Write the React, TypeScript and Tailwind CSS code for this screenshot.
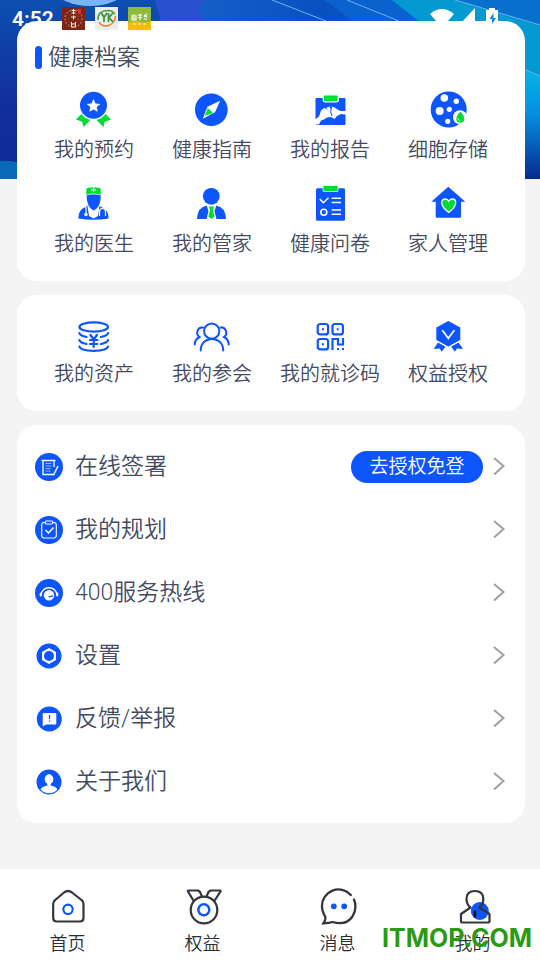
import type { ReactNode } from "react";

type Item = {
  label: string;
  icon: ReactNode;
};

const BLUE = "#0d55ff";
const GREEN = "#00dc32";
const DARK = "#33363f";

const records: Item[] = [
  {
    label: "我的预约",
    icon: (
      <>
        <path fill={GREEN} d="M2 29.5 7.3 24q4 5 9.4 5.8L9.6 37l-1.4-5.2zM37 29.5 31.7 24q-4 5-9.4 5.8l7.1 7.2 1.4-5.2z" />
        <circle cx="19.5" cy="15.3" r="13.5" fill={BLUE} />
        <path fill="#fff" d="m19.5 9 2 4.4 4.8.5-3.6 3.2 1 4.7-4.2-2.4-4.2 2.4 1-4.7-3.6-3.2 4.8-.5z" />
      </>
    ),
  },
  {
    label: "健康指南",
    icon: (
      <>
        <circle cx="19.3" cy="19.7" r="16.3" fill={BLUE} />
        <path fill="#fff" d="M28.2 10.8 23 22.3 10.8 28.8l4.6-12z" />
        <path fill={GREEN} d="m15.8 18 5.2 5-8.2 3z" />
      </>
    ),
  },
  {
    label: "我的报告",
    icon: (
      <>
        <path fill={BLUE} d="M6.5 8h28q1 0 1 1v25q0 1-1 1h-28q-1 0-1-1V9q0-1 1-1z" />
        <path
          fill="#fff"
          d="m5 29.5 4-3 2-6 3-2.5 3 1 2 3-2.5-4.5 3-1 1 3 1-3 3 1 3 2 3 1.5h8.500v4L31 24l-4 2-2.500 3-3.500-2-4 .5-3 2-3 1-2 4H5z"
        />
        <path stroke={BLUE} strokeWidth="1" fill="none" d="M21.5 17q-2 5 .5 9" />
        <rect x="13.3" y="4.8" width="15" height="7" rx="1.5" fill={GREEN} stroke="#fff" strokeWidth="1.3" />
      </>
    ),
  },
  {
    label: "细胞存储",
    icon: (
      <>
        <circle cx="20.7" cy="19.5" r="18" fill={BLUE} />
        <g fill="#fff">
          <circle cx="16.3" cy="8" r="3.8" />
          <circle cx="28.3" cy="11.3" r="2.7" />
          <circle cx="11.7" cy="21" r="4" />
          <circle cx="21.3" cy="19.3" r="2.6" />
          <circle cx="19.7" cy="31.3" r="2.6" />
          <circle cx="32" cy="27.2" r="7" />
        </g>
        <path fill={GREEN} d="M32.3 21.5q4 4.500 4 7.200a4 4 0 0 1-8 0q0-2.700 4-7.200z" />
        <path fill="none" stroke="#fff" strokeWidth=".7" d="M30 28q0 2.500 2 3" />
      </>
    ),
  },
  {
    label: "我的医生",
    icon: (
      <>
        <path fill={BLUE} d="M4.300 34.500q0-9 7-11.500l3-1.500h10l3 1.500q7.400 2.500 7.400 11.500-15 2.500-30.400 0z" />
        <path fill="#fff" d="m13.500 22 1.500 10 4.500 2.500 4.500-2.500L25.500 22z" />
        <path fill={BLUE} d="M12.700 10.300h14q.5 9-4 14.200l-3 2-3-2q-4.500-5.200-4-14.200z" />
        <path fill={GREEN} stroke="#fff" strokeWidth=".6" d="M12 11V5q0-2 7.500-2T27 5v6q-7.500-2.500-15 0z" />
        <path stroke="#fff" strokeWidth="1.200" fill="none" d="M19.500 3.500v4.600M17.200 5.800h4.600M12 23v6M25.500 32v-4q0-3.500 3-3.500t3 3.500v4" />
        <circle cx="12" cy="30.500" r="1.700" fill="#fff" />
      </>
    ),
  },
  {
    label: "我的管家",
    icon: (
      <>
        <circle cx="19.300" cy="12.300" r="8.400" fill={BLUE} />
        <path fill={BLUE} d="M5 35q.5-12 10-13.500h9Q33.500 23 34 35z" />
        <path fill="#fff" d="M14.500 21h10l-2 6 2 8.500h-10l2-8.500z" />
        <path fill={GREEN} d="M17 22.500h5L20.900 26l1.700 6.500-3.100 2.500-3.100-2.500L18.100 26z" />
      </>
    ),
  },
  {
    label: "健康问卷",
    icon: (
      <>
        <rect x="6" y="4.300" width="29" height="32.500" rx="1.500" fill={BLUE} />
        <rect x="13" y="1.500" width="15" height="6" rx=".5" fill={GREEN} stroke="#fff" strokeWidth=".7" />
        <path stroke="#fff" strokeWidth="1.500" fill="none" d="m9.800 15 3.500 3.700 5.200-5M21.700 14.200H31M21.700 18.500H31M21.700 26H31M21.700 30.300H31" />
        <circle cx="13.800" cy="28.300" r="3" stroke="#fff" strokeWidth="1.600" fill="none" />
      </>
    ),
  },
  {
    label: "家人管理",
    icon: (
      <>
        <path fill={BLUE} d="m20.300 2.700 17 15H33v15q0 1-1 1H8.700q-1 0-1-1v-15H3.300z" />
        <path
          fill={GREEN}
          stroke="#fff"
          strokeWidth="1.300"
          d="M20.700 28.500q-7-5.500-7-9.800 0-3.700 3.500-3.700 2.300 0 3.500 2.200 1.200-2.200 3.500-2.200 3.500 0 3.500 3.700 0 4.300-7 9.800z"
        />
      </>
    ),
  },
];

const services: Item[] = [
  {
    label: "我的资产",
    icon: (
      <g fill="none" stroke={BLUE} strokeWidth="2.200" strokeLinecap="round">
        <ellipse cx="19.700" cy="10" rx="14.300" ry="4.600" />
        <path d="M5.300 16q.7 2.700 7.200 4M34.100 16q-.7 2.700-7.200 4M5.300 23q.7 2.700 7.200 4M34.100 23q-.7 2.700-7.200 4M5.300 29.500q1.200 4.300 14.400 4.300t14.400-4.300M16.500 18l3.200 4.500 3.200-4.500M19.700 22.500V30M16 23h7.400M16 27h7.400" />
      </g>
    ),
  },
  {
    label: "我的参会",
    icon: (
      <g fill="none" stroke={BLUE} strokeWidth="2" strokeLinecap="round">
        <circle cx="19.700" cy="14.200" r="7.600" />
        <path d="M8.700 33.500c0-15.500 22.500-15.500 22.500 0M11 10.500c-6-1-7.500 7-3.500 9.500-3 1.500-4.700 4-4.700 7.500M28.500 10.500c6-1 7.500 7 3.500 9.500 3 1.500 4.700 4 4.700 7.500" />
      </g>
    ),
  },
  {
    label: "我的就诊码",
    icon: (
      <>
        <g fill="none" stroke={BLUE} strokeWidth="2.200">
          <rect x="7.700" y="7" width="10.400" height="10.400" rx="2.500" />
          <rect x="22.500" y="7" width="10.400" height="10.400" rx="2.500" />
          <rect x="7.700" y="22" width="10.400" height="10.400" rx="2.500" />
          <path d="M22.500 33V22h5.500v5.500h5V21" />
        </g>
        <path fill={BLUE} d="M12 11.300h2v2h-2zM26.700 11.300h2v2h-2zM12 26.300h2v2h-2zM27 31h2v2h-2zM32 31h2v2h-2z" />
      </>
    ),
  },
  {
    label: "权益授权",
    icon: (
      <>
        <path fill={BLUE} d="m10 25.500 7.500 4-3.800 5.200-2-3.200-6 .5zM30.600 25.500l-7.500 4 3.800 5.200 2-3.200 6 .5z" />
        <path
          fill={BLUE}
          stroke="#fff"
          strokeWidth="1.200"
          strokeLinejoin="round"
          d="m20.300 3.300 12.600 7v13l-12.600 7-12.600-7v-13z"
        />
        <path stroke="#fff" strokeWidth="1.800" strokeLinecap="round" fill="none" d="m14.700 13.700 5.600 7.600 5.600-7.600" />
      </>
    ),
  },
];

const menu: (Item & { action?: string })[] = [
  {
    label: "在线签署",
    action: "去授权免登",
    icon: (
      <>
        <circle cx="14" cy="14" r="14" fill={BLUE} />
        <path stroke="#fff" strokeWidth="1.300" fill="none" d="M19 14V7.500H8v14h11V20M6.500 7.500H9M18 7.500h2.500" />
        <path stroke="#b9ceff" strokeWidth=".8" d="M10.500 10.500h6M10.500 13h6M10.500 15.500h5M10.500 18h5" />
        <path stroke="#fff" strokeWidth="1.500" d="m23 13-3.500 7" />
      </>
    ),
  },
  {
    label: "我的规划",
    icon: (
      <>
        <circle cx="14" cy="14" r="14" fill={BLUE} />
        <rect x="6.700" y="6.500" width="14.600" height="15.500" rx="2.500" stroke="#fff" strokeWidth="1.100" fill="none" />
        <rect x="10" y="5" width="8" height="3" rx="1.500" fill={BLUE} stroke="#fff" strokeWidth="1.100" />
        <path stroke="#fff" strokeWidth="1.500" fill="none" d="m10.500 14 3 3 5-5.500" />
      </>
    ),
  },
  {
    label: "400服务热线",
    icon: (
      <>
        <circle cx="14" cy="14" r="14" fill={BLUE} />
        <path stroke="#fff" strokeWidth="1.400" fill="none" d="M6 17c0-11 16-11 16 0" />
        <path stroke="#fff" strokeWidth="2" strokeLinecap="round" d="M5.700 14.500v2M22.300 14.500v2" />
        <circle cx="14" cy="16.300" r="5.200" fill="#fff" />
        <path stroke={BLUE} strokeWidth="1.200" fill="none" d="M13.500 17.500q3 .5 4.500-1" />
      </>
    ),
  },
  {
    label: "设置",
    icon: (
      <>
        <circle cx="14" cy="14" r="12.500" fill={BLUE} />
        <path fill="#fff" d="m14 6 7 4v8l-7 4-7-4v-8z" />
        <circle cx="14" cy="14" r="5" fill={BLUE} />
      </>
    ),
  },
  {
    label: "反馈/举报",
    icon: (
      <>
        <circle cx="14.300" cy="14" r="12.500" fill={BLUE} />
        <path fill="#fff" d="M8.700 8h11.600q1 0 1 1v9.500q0 1-1 1H11l-3.300 2V9q0-1 1-1z" />
        <path stroke={BLUE} strokeWidth="1.300" d="M14.500 10v4.200M14.500 15.500v1.300" />
      </>
    ),
  },
  {
    label: "关于我们",
    icon: (
      <>
        <circle cx="14" cy="14" r="12.500" fill={BLUE} />
        <ellipse cx="14" cy="11.300" rx="4.300" ry="5" fill="#fff" />
        <path fill="#fff" d="M12.300 15h3.400v2.500q5.500 1 6.800 4-3.500 3.800-8.500 3.800t-8.500-3.800q1.300-3 6.800-4z" />
      </>
    ),
  },
];

const tabs: Item[] = [
  {
    label: "首页",
    icon: (
      <g fill="none" strokeWidth="2.200">
        <path stroke={DARK} d="M5.200 17q0-2.500 2-4L16 5.500q4-3 8 0l9.500 7.500q2 1.500 2 4v14q0 3.500-3.500 3.500H8.700q-3.500 0-3.500-3.500z" />
        <circle cx="20" cy="22.300" r="4.700" stroke={BLUE} />
      </g>
    ),
  },
  {
    label: "权益",
    icon: (
      <g fill="none" strokeWidth="2.200" strokeLinejoin="round">
        <path stroke={DARK} d="M11 14.500 5 4.500Q4.500 3.500 5.500 3.500h9.500l2 1.500 2 4.500M31 14.500l6.500-10Q38 3.500 37 3.500h-9.500l-2 1.500-2 4.500" />
        <circle cx="21" cy="23" r="13.300" stroke={DARK} />
        <circle cx="20.800" cy="22.700" r="5.500" stroke={BLUE} strokeWidth="2.500" />
      </g>
    ),
  },
  {
    label: "消息",
    icon: (
      <>
        <path
          fill="none"
          stroke={DARK}
          strokeWidth="2.300"
          strokeLinecap="round"
          d="M32.800 8A16.500 16.500 0 0 0 4 19.500q0 4.500 3.300 10.500Q8 33 5.500 36.300q6-.2 9-1.300Q28 39 34.500 29.500q5-8.500 1.500-17"
        />
        <circle cx="15.800" cy="19.300" r="2.900" fill={BLUE} />
        <circle cx="26.200" cy="19.300" r="2.900" fill={BLUE} />
      </>
    ),
  },
  {
    label: "我的",
    icon: (
      <>
        <circle cx="26.800" cy="24" r="9" fill={BLUE} />
        <path
          fill="none"
          stroke={DARK}
          strokeWidth="2.200"
          strokeLinejoin="round"
          d="M17.500 20.500q-4-3-4-8.500 0-8 8.400-8t8.400 8q0 5.500-4 8.500l10.200 6.500v7.500q0 1-1 1H9q-1 0-1-1V27z"
        />
        <path stroke="#0a0a14" strokeWidth="2.500" d="M22 23.500v7" />
      </>
    ),
  },
];

const Banner = () => (
  <svg className="absolute inset-x-0 top-0 h-[179px] w-full" viewBox="0 0 540 179" preserveAspectRatio="none" aria-hidden="true">
    <defs>
      <linearGradient id="base" x1="0" x2="1">
        <stop offset="0" stopColor="#0d46ac" />
        <stop offset=".35" stopColor="#1560c8" />
        <stop offset=".6" stopColor="#0850c0" />
        <stop offset="1" stopColor="#0684d2" />
      </linearGradient>
      <linearGradient id="left" x1="0" x2="0" y1="0" y2="1">
        <stop offset="0" stopColor="#0c50b2" />
        <stop offset=".55" stopColor="#12309c" />
        <stop offset="1" stopColor="#0f2a9a" />
      </linearGradient>
      <linearGradient id="right" x1="0" x2="0" y1="0" y2="1">
        <stop offset="0" stopColor="#05b4e4" />
        <stop offset=".4" stopColor="#0590e0" />
        <stop offset="1" stopColor="#062a90" />
      </linearGradient>
    </defs>
    <rect width="540" height="179" fill="url(#base)" />
    <path fill="url(#left)" d="M0 0h160v179H0z" />
    <ellipse cx="90" cy="-10" rx="34" ry="16" fill="#78b4fa" />
    <path fill="#2b50cf" d="M155 0h50l-6 10 10 20h-45z" />
    <path fill="#0968b8" d="M0 161q10-1 20 2v16H0z" />
    <path fill="#0a62cf" d="M325 0h75l50 30h-85z" />
    <path fill="#0599d2" d="M392 0h90l60 26v50L430 30z" />
    <path fill="#0670cc" d="M455 0h85v26z" />
    <path fill="url(#right)" d="m524 69 16 7v103h-16z" />
    <path stroke="#6db4ef" strokeWidth="1" fill="none" d="m272 0 54 21M347 0l52 21M455 0l85 25M524 69l16 7" />
  </svg>
);

const StatusBar = () => (
  <div className="absolute inset-x-0 top-0 z-10 flex h-[37px] items-center justify-between pl-3 pr-[39px] text-white">
    <div className="flex items-center gap-[10px]">
      <span className="w-10 pt-0.5 font-['Roboto'] text-[21px] font-semibold">4:52</span>
      <svg width="23" height="23" viewBox="0 0 23 23" aria-hidden="true">
        <rect width="23" height="23" fill="#7c2418" />
        <circle cx="11.500" cy="11.500" r="8.500" fill="none" stroke="#b0683f" strokeWidth="1.500" strokeDasharray="2 1.500" />
        <circle cx="11.500" cy="11.500" r="5" fill="none" stroke="#a05432" strokeDasharray="1 1" />
        <path stroke="#fff0dc" fill="none" d="M9.500 3.500h4M11.500 2v5M9.500 6h4M9 10h5M11.500 8.500v4M9.500 15v5h4v-5M9.500 17h4" />
        <path fill="#e03028" d="M16 2h3v5h-3z" />
      </svg>
      <svg width="23" height="23" viewBox="0 0 23 23" aria-hidden="true">
        <rect width="23" height="23" fill="#ececec" />
        <path d="M3 13Q2 4 13 3.500q5 0 7 4" fill="none" stroke="#45a53a" strokeWidth="1.500" />
        <path d="M20.500 9q-1 9-9.500 10-5 0-7-4" fill="none" stroke="#ef7b25" strokeWidth="1.500" />
        <path d="m6.500 6 2.500 4.500L12 6M9 10.500V15M13.500 6v9M18 6l-4 4.500 4 4.500" fill="none" stroke="#3a9638" strokeWidth="1.800" />
      </svg>
      <svg width="23" height="23" viewBox="0 0 23 23" aria-hidden="true">
        <rect width="23" height="23" fill="#8fba3c" />
        <path d="M0 16q6-3 12-1t11-1v9H0z" fill="#f6bd08" />
        <path stroke="#fff" strokeWidth="1.200" fill="none" d="M4 8v5h4V8M6 7v6M10 8h4M10 10.500h4M12 7v6M16 8l3 2M19 7l-3 3M16 12h3M5 17h3M10 17h3M15 17h3" />
      </svg>
    </div>
    <div className="flex items-center" aria-hidden="true">
      <svg width="24" height="22" viewBox="0 0 24 22" fill="#fff">
        <path d="M0 6q12-10 24 0L12 20z" />
      </svg>
      <svg className="ml-1.5" width="15" height="22" viewBox="0 0 15 22" fill="#fff">
        <path d="M15 0v16H0z" />
      </svg>
      <svg className="ml-2" width="18" height="22" viewBox="0 0 18 22">
        <path fill="#fff" d="M6 0h6v2h3v20H3V2h3z" />
        <path fill="#0b87cf" d="m10.500 5-4 6H9v5l4-6h-2.500z" />
      </svg>
    </div>
  </div>
);

const Tile = ({ item, gap }: { item: Item; gap?: boolean }) => (
  <a href="#" className="flex flex-col items-center whitespace-nowrap">
    <svg className="h-10 w-10" viewBox="0 0 40 40" aria-hidden="true">
      {item.icon}
    </svg>
    <span className={gap ? "mt-1 text-[20px] leading-8" : "text-[20px] leading-[34px]"}>{item.label}</span>
  </a>
);

const App = () => {
  return (
    <div className="relative flex min-h-screen flex-col bg-[#f4f4f4] font-['Roboto','Noto_Sans_CJK_SC',sans-serif] font-[350] text-[#444b63]">
      <Banner />
      <StatusBar />

      <main className="relative ml-[17px] mr-[15px] mb-6 mt-[21px] flex flex-col gap-[14px]">
        <section className="rounded-[20px] bg-white px-[18px] pb-[21px] pt-[18px]">
          <h2 className="mb-[15px] flex items-center gap-1.5 text-[23px] font-[350] leading-[36px]">
            <span className="h-[23px] w-[7px] rounded-full bg-[#0d55ff]" />
            <span className="pt-0.5 leading-[34px]">健康档案</span>
          </h2>
          <div className="grid grid-cols-4 gap-y-[18px]">
            {records.map((item) => (
              <Tile key={item.label} item={item} gap />
            ))}
          </div>
        </section>

        <section className="grid grid-cols-4 rounded-[20px] bg-white px-[18px] pb-5 pt-[22px]">
          {services.map((item) => (
            <Tile key={item.label} item={item} />
          ))}
        </section>

        <section className="rounded-[20px] bg-white py-[10px] pl-[18px] pr-5">
          {menu.map((item) => (
            <div key={item.label} className="flex h-[63px] items-center">
              <a href="#" className="flex flex-1 items-center gap-3 text-[23px]">
                <svg className="h-7 w-7" viewBox="0 0 28 28" aria-hidden="true">
                  {item.icon}
                </svg>
                <span className="pt-0.5">{item.label}</span>
              </a>
              {item.action && (
                <button className="mr-[10px] h-8 w-[132px] rounded-full bg-[#0d55ff] text-[19px] leading-8 text-white">
                  {item.action}
                </button>
              )}
              <svg className="h-5 w-3" viewBox="0 0 12 20" fill="none" stroke="#a0a0a0" strokeWidth="2" aria-hidden="true">
                <path d="m1 1 9.500 8L1 17.500" />
              </svg>
            </div>
          ))}
        </section>
      </main>

      <nav className="relative mt-auto grid grid-cols-4 bg-white pb-[3px] pt-[18px] text-[#2b2e38]">
        {tabs.map((item) => (
          <a key={item.label} href="#" className="flex flex-col items-center">
            <svg className="h-10 w-10" viewBox="0 0 40 40" aria-hidden="true">
              {item.icon}
            </svg>
            <span className="mt-1 text-[18px] leading-[26px]">{item.label}</span>
          </a>
        ))}
        <span className="absolute bottom-1 right-2 font-['Inter'] text-[25px] font-bold leading-9 text-[#2a9a14]">ITMOP.COM</span>
      </nav>
    </div>
  );
};

export default App;
